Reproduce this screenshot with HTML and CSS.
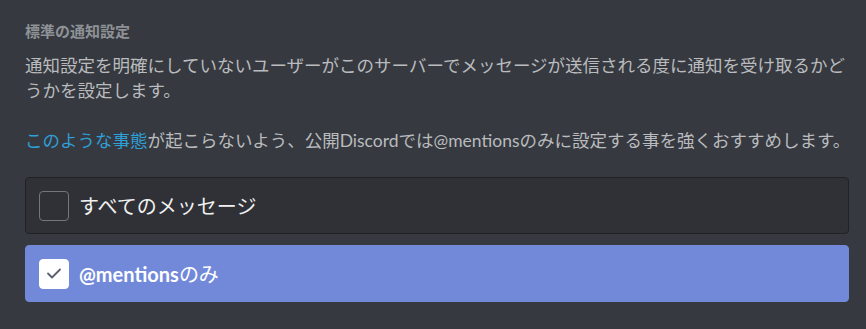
FILE: index.html
```html
<!DOCTYPE html>
<html lang="ja">
<head>
<meta charset="utf-8">
<link rel="stylesheet" href="styles.css">
</head>
<body>
<div class="section">
  <h5 class="heading">標準の通知設定</h5>
  <p class="desc">通知設定を明確にしていないユーザーがこのサーバーでメッセージが送信される度に通知を受け取るかどうかを設定します。</p>
  <p class="desc second"><a class="link">このような事態</a>が起こらないよう、公開<span class="latin">Discord</span>では<span class="latin">@mentions</span>のみに設定する事を強くおすすめします。</p>
  <div class="options">
    <div class="option">
      <span class="box"></span>
      <span class="label">すべてのメッセージ</span>
    </div>
    <div class="option selected">
      <span class="box checked">
        <svg width="30" height="30" viewBox="0 0 30 30"><polyline points="9,14.5 13,18.5 21,10.5" fill="none" stroke="#5b6070" stroke-width="1.8" stroke-linecap="round" stroke-linejoin="round"/></svg>
      </span>
      <span class="label"><b class="latin">@mentions</b>のみ</span>
    </div>
  </div>
</div>
</body>
</html>
```
FILE: styles.css
```css
html, body {
  margin: 0;
  padding: 0;
  background: #36393f;
}
body {
  font-family: "Noto Sans CJK JP", "Noto Sans", sans-serif;
}
.section {
  padding: 21px 17px 0 25px;
}
.heading {
  margin: 0 0 11px;
  font-size: 15px;
  line-height: 20px;
  font-weight: 700;
  color: #8e9297;
}
.desc {
  margin: 0;
  font-size: 17.5px;
  line-height: 25px;
  color: #b9bbbe;
}
.desc.second {
  margin-top: 25px;
  white-space: nowrap;
}
.latin {
  font-family: "Lato", "Noto Sans", sans-serif;
}
.link {
  color: #2f9fd8;
  cursor: pointer;
}
.options {
  margin-top: 24px;
  display: flex;
  flex-direction: column;
  gap: 11px;
}
.option {
  display: flex;
  align-items: center;
  padding: 12.5px 14px 12.5px 12.5px;
  border: 1px solid #202225;
  background: #2f3136;
  border-radius: 4px;
}
.option.selected {
  background: #7289da;
  border-color: #7289da;
}
.box {
  width: 30px;
  height: 30px;
  box-sizing: border-box;
  border: 1px solid #72767d;
  border-radius: 4px;
  flex: none;
  display: flex;
  align-items: center;
  justify-content: center;
}
.box.checked {
  background: #fff;
  border-color: #fff;
}
.box svg {
  display: block;
  flex: none;
}
.label {
  margin-left: 10.5px;
  font-size: 20px;
  line-height: 30px;
  color: #f0f0f0;
}
.selected .label {
  color: #fff;
}
.label b {
  font-weight: 700;
}
```
